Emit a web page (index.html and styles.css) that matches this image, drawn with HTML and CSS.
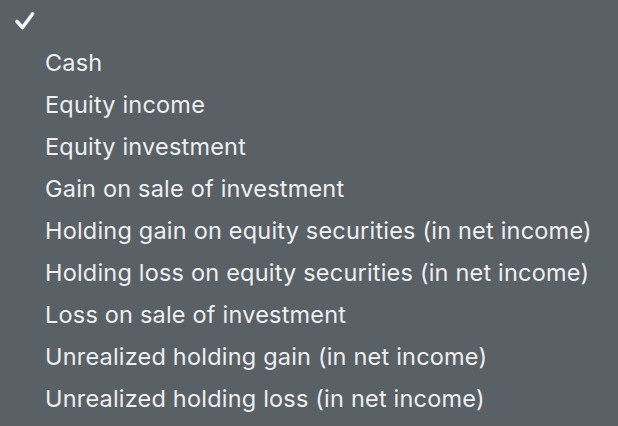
FILE: index.html
```html
<!DOCTYPE html>
<html>
<head>
<meta charset="utf-8">
<link rel="stylesheet" href="styles.css">
</head>
<body>
<ul class="menu">
  <li class="item checked"><svg class="check" width="22" height="20" viewBox="0 0 22 20"><path d="M3 10.5 L8.5 16.5 L18.5 3" fill="none" stroke="#f4f4f4" stroke-width="3.6" stroke-linecap="round" stroke-linejoin="round"/></svg></li>
  <li class="item">Cash</li>
  <li class="item">Equity income</li>
  <li class="item">Equity investment</li>
  <li class="item">Gain on sale of investment</li>
  <li class="item">Holding gain on equity securities (in net income)</li>
  <li class="item">Holding loss on equity securities (in net income)</li>
  <li class="item">Loss on sale of investment</li>
  <li class="item">Unrealized holding gain (in net income)</li>
  <li class="item">Unrealized holding loss (in net income)</li>
</ul>
</body>
</html>
```

FILE: styles.css
```css
html, body {
  margin: 0;
  padding: 0;
  background: #5a6166;
  width: 618px;
  height: 426px;
  overflow: hidden;
}
.menu {
  list-style: none;
  margin: 0;
  padding: 0;
  font-family: Inter, "Liberation Sans", Arial, sans-serif;
  font-size: 23.5px;
  letter-spacing: 0.2px;
  color: #eeeff0;
}
.item {
  height: 42px;
  line-height: 42px;
  padding-left: 45px;
  white-space: nowrap;
}
.checked {
  position: relative;
}
.check {
  position: absolute;
  left: 14px;
  top: 11px;
}
```
